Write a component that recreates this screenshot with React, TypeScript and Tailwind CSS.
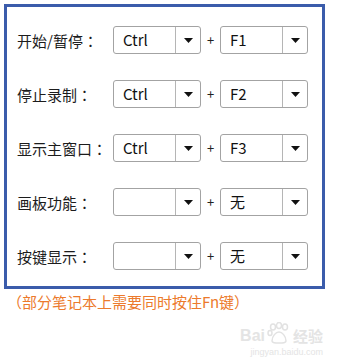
import React from "react";

const rows = [
  { label: "开始/暂停：", mod: "Ctrl", key: "F1" },
  { label: "停止录制：", mod: "Ctrl", key: "F2" },
  { label: "显示主窗口：", mod: "Ctrl", key: "F3" },
  { label: "画板功能：", mod: "", key: "无" },
  { label: "按键显示：", mod: "", key: "无" },
];

const Select = ({ value }: { value: string }) => (
  <div className="flex h-[28px] w-[88px] items-stretch rounded-[3px] border border-[#a3a3a3] bg-white">
    <div className="flex flex-1 items-center pl-[9px] text-[15px] text-[#111]">{value}</div>
    <div className="flex w-[25px] items-center justify-center border-l border-[#b5b5b5]">
      <svg width="9" height="5" viewBox="0 0 9 5">
        <path d="M0 0h9L4.5 5z" fill="#111" />
      </svg>
    </div>
  </div>
);

export default function App() {
  return (
    <div
      className="h-[360px] w-[351px] bg-white pl-[4px] pt-[4px]"
      style={{ fontFamily: '"Noto Sans CJK SC", "Noto Sans", sans-serif' }}
    >
      <div className="flex h-[285px] w-[321px] flex-col gap-[26px] border-[3px] border-[#3b5cab] pl-[10px] pt-[19px]">
        {rows.map((r) => (
          <div key={r.label} className="flex h-[28px] items-center">
            <div
              className="w-[96px] text-[15px] leading-none text-[#1c1c1c]"
              style={{ fontFamily: '"Noto Sans CJK TC", "Noto Sans CJK SC", sans-serif' }}
            >
              {r.label}
            </div>
            <Select value={r.mod} />
            <div className="flex w-[19px] justify-center text-[13px] text-[#222]">+</div>
            <Select value={r.key} />
          </div>
        ))}
      </div>
      <div className="mt-[3px] pl-[3px] text-[15px] leading-[20px] text-[#ec7a2c]">
        （部分笔记本上需要同时按住Fn键）
      </div>
      <div className="mt-[10px] flex flex-col items-end pr-[28px] text-[#e4e4e4]">
        <div className="flex items-end gap-[2px]">
          <span className="text-[16px] font-bold leading-[16px]" style={{ fontFamily: '"Liberation Sans", sans-serif' }}>
            Bai
          </span>
          <svg width="24" height="22" viewBox="0 0 24 22">
            <g fill="none" stroke="#e2e2e2" strokeWidth="1.5">
              <ellipse cx="6" cy="5" rx="2.5" ry="3" />
              <ellipse cx="12" cy="3.5" rx="2.5" ry="3" />
              <ellipse cx="18" cy="5" rx="2.5" ry="3" />
              <ellipse cx="3" cy="11" rx="2" ry="2.5" />
              <path d="M5 19c0-5 4-9 7-9s7 4 7 9c0 2-3 2-7 2s-7 0-7-2z" />
            </g>
          </svg>
          <span className="text-[15px] font-bold leading-[16px]">经验</span>
        </div>
        <div className="mt-[3px] text-[9px] leading-[10px]" style={{ fontFamily: '"Liberation Sans", sans-serif' }}>
          jingyan.baidu.com
        </div>
      </div>
    </div>
  );
}
